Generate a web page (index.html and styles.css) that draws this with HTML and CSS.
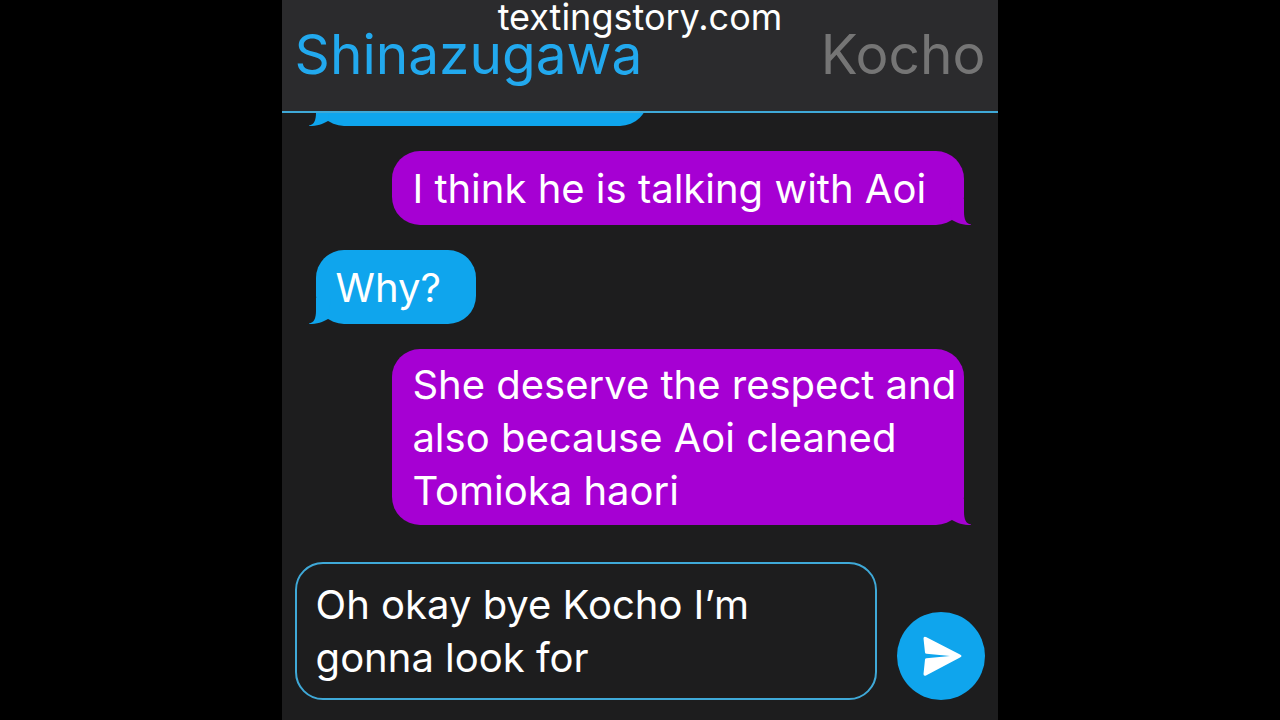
FILE: index.html
```
<!DOCTYPE html>
<html lang="en">

<head>
  <meta charset="utf-8">
  <title>Texting Story</title>
  <link rel="stylesheet" href="styles.css">
</head>

<body>
  <!-- bubble tail, reused by every message -->
  <svg class="defs" aria-hidden="true">
    <symbol id="tail" viewBox="0 0 22 26">
      <path d="M7 0V13C7 20 5 25 0 25.500V26C8 26 14 24 19 21L22 0Z" />
    </symbol>
  </svg>

  <div class="phone">
    <header class="header">
      <p class="watermark">textingstory.com</p>
      <h1 class="name active">Shinazugawa</h1>
      <h1 class="name">Kocho</h1>
    </header>

    <main class="chat">
      <div class="bubble left cut">
        <svg class="tail"><use href="#tail" /></svg>
      </div>
      <div class="bubble right">
        <p>I think he is talking with Aoi</p>
        <svg class="tail"><use href="#tail" /></svg>
      </div>
      <div class="bubble left">
        <p>Why?</p>
        <svg class="tail"><use href="#tail" /></svg>
      </div>
      <div class="bubble right">
        <p>She deserve the respect and<br>also because Aoi cleaned<br>Tomioka haori</p>
        <svg class="tail"><use href="#tail" /></svg>
      </div>
    </main>

    <form class="composer">
      <textarea class="draft" rows="2" aria-label="Message">Oh okay bye Kocho I’m
gonna look for</textarea>
      <button class="send" type="button" aria-label="Send">
        <svg viewBox="0 0 88 88">
          <path d="M26.500 26.500Q26.500 24 29 25L63 42.500Q66 44 63 45.500L29 63.500Q26.500 64.500 26.500 62L28 47.500Q28.200 46.300 29.500 46.200L53 44L29.500 41.800Q28.200 41.700 28 40.500Z" />
        </svg>
      </button>
    </form>
  </div>
</body>

</html>
```

FILE: styles.css
```
:root {
  --blue: #0fa5ed;
  --purple: #a600d3;
  --line: #3fa9d8;
  --dark: #1d1d1e;
}

* {
  box-sizing: border-box;
}

body {
  margin: 0;
  background-color: #000;
  color: #fff;
  font-family: Inter, "Liberation Sans", sans-serif;
}

h1, p {
  margin: 0;
  font-weight: 400;
}

.defs {
  display: none;
}

.phone {
  display: flex;
  flex-direction: column;
  width: 56%;
  height: 100vh;
  margin: 0 auto;
  background-color: var(--dark);
}

/* header */
.header {
  position: relative;
  display: flex;
  justify-content: space-between;
  padding: 18px 13px 20px;
  background-color: #2b2b2d;
  border-bottom: 2px solid var(--line);
}

.name {
  font-size: 55px;
  line-height: 73px;
  color: #757575;
}

.active {
  color: #22a9ee;
}

.watermark {
  position: absolute;
  top: 0;
  left: 0;
  right: 0;
  font-size: 36px;
  line-height: 34px;
  text-align: center;
}

/* messages */
.chat {
  flex: 1;
  min-height: 0;
  display: flex;
  flex-direction: column;
  justify-content: flex-end;
  gap: 25px;
  padding: 0 34px 37px;
  overflow: hidden;
}

.bubble {
  position: relative;
  display: flex;
  flex-shrink: 0;
  align-items: center;
  min-height: 74px;
  padding: 9px 20px 8px;
  border-radius: 28px;
  font-size: 40px;
  line-height: 53px;
  white-space: nowrap;
}

.left {
  align-self: flex-start;
  min-width: 160px;
  background-color: var(--blue);
  fill: var(--blue);
}

.right {
  align-self: flex-end;
  width: 572px;
  background-color: var(--purple);
  fill: var(--purple);
}

.cut {
  width: 332px;
}

.tail {
  position: absolute;
  bottom: 0;
  left: -7px;
  width: 22px;
  height: 26px;
}

.right .tail {
  left: auto;
  right: -7px;
  transform: scaleX(-1);
}

/* composer */
.composer {
  display: flex;
  align-items: flex-end;
  gap: 20px;
  padding: 0 13px 20px;
}

.draft {
  flex: 1;
  min-width: 0;
  height: 138px;
  padding: 14px 19px;
  border: 2px solid var(--line);
  border-radius: 28px;
  outline: none;
  resize: none;
  overflow: hidden;
  background: none;
  color: #fff;
  font-family: inherit;
  font-size: 40px;
  line-height: 53px;
}

.send {
  width: 88px;
  height: 88px;
  padding: 0;
  border: none;
  border-radius: 50%;
  background-color: var(--blue);
  cursor: pointer;
}

.send svg {
  display: block;
  fill: #fff;
}
```
